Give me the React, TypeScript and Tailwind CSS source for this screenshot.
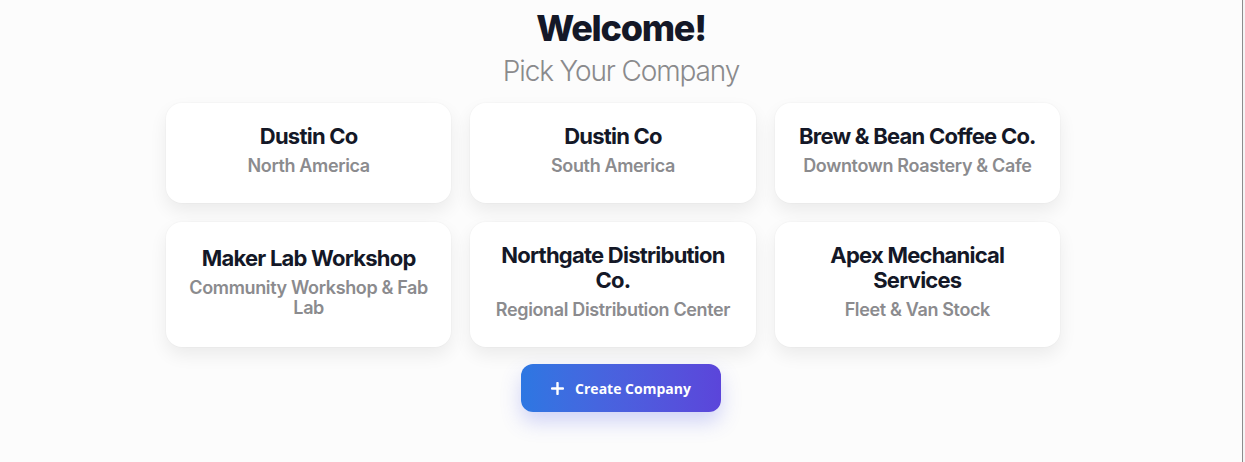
import React from "react";

type Company = { name: string; region: string };

const companies: Company[] = [
  { name: "Dustin Co", region: "North America" },
  { name: "Dustin Co", region: "South America" },
  { name: "Brew & Bean Coffee Co.", region: "Downtown Roastery & Cafe" },
  { name: "Maker Lab Workshop", region: "Community Workshop & Fab Lab" },
  { name: "Northgate Distribution Co.", region: "Regional Distribution Center" },
  { name: "Apex Mechanical Services", region: "Fleet & Van Stock" },
];

function CompanyCard({ company }: { company: Company }) {
  return (
    <button className="flex flex-col items-center justify-center rounded-2xl bg-white px-[20px] pb-[26px] pt-[20px] text-center shadow-[0_8px_18px_rgba(0,0,0,0.07),0_0_0_1px_rgba(0,0,0,0.015)]">
      <span className="text-[22px] font-bold leading-[25px] tracking-[-0.035em] text-[#141827]">
        {company.name}
      </span>
      <span className="mt-[7px] text-[18px] font-semibold leading-[20px] tracking-[-0.02em] text-[#8b8b8e]">
        {company.region}
      </span>
    </button>
  );
}

export default function App() {
  return (
    <div className="flex h-[462px] w-[1245px] bg-white" style={{ fontFamily: "Inter, 'Noto Sans', sans-serif" }}>
      <main className="flex h-full w-[1242px] flex-col items-center bg-[#fcfcfc] pt-[6px]">
        <h1 className="text-[36px] font-extrabold leading-[44px] tracking-[-0.035em] text-[#141827]">
          Welcome!
        </h1>
        <p className="mt-[3px] text-[28px] font-light leading-[36px] tracking-[-0.04em] text-[#8a8a8c]">
          Pick Your Company
        </p>
        <div className="mr-[16px] mt-[14px] grid w-[894px] grid-cols-3 gap-[19px]">
          {companies.slice(0, 3).map((c, i) => (
            <div key={i} className="grid h-[100px]">
              <CompanyCard company={c} />
            </div>
          ))}
          {companies.slice(3).map((c, i) => (
            <div key={i + 3} className="grid h-[125px]">
              <CompanyCard company={c} />
            </div>
          ))}
        </div>
        <button
          className="mt-[17px] flex h-[48px] w-[200px] items-center justify-center gap-[11px] rounded-[12px] bg-gradient-to-r from-[#2c77e2] to-[#5b45da] text-white shadow-[0_10px_20px_rgba(80,90,230,0.25)]"
          style={{ fontFamily: "'Open Sans', 'Noto Sans', sans-serif" }}
        >
          <svg width="13" height="13" viewBox="0 0 13 13" fill="none">
            <path d="M6.5 1v11M1 6.5h11" stroke="white" strokeWidth="2.4" strokeLinecap="round" />
          </svg>
          <span className="text-[14px] font-bold">Create Company</span>
        </button>
      </main>
      <div className="h-full w-[1px] bg-[#8c8c8c]" />
      <div className="h-full w-[2px] bg-[#f4f4f4]" />
    </div>
  );
}
